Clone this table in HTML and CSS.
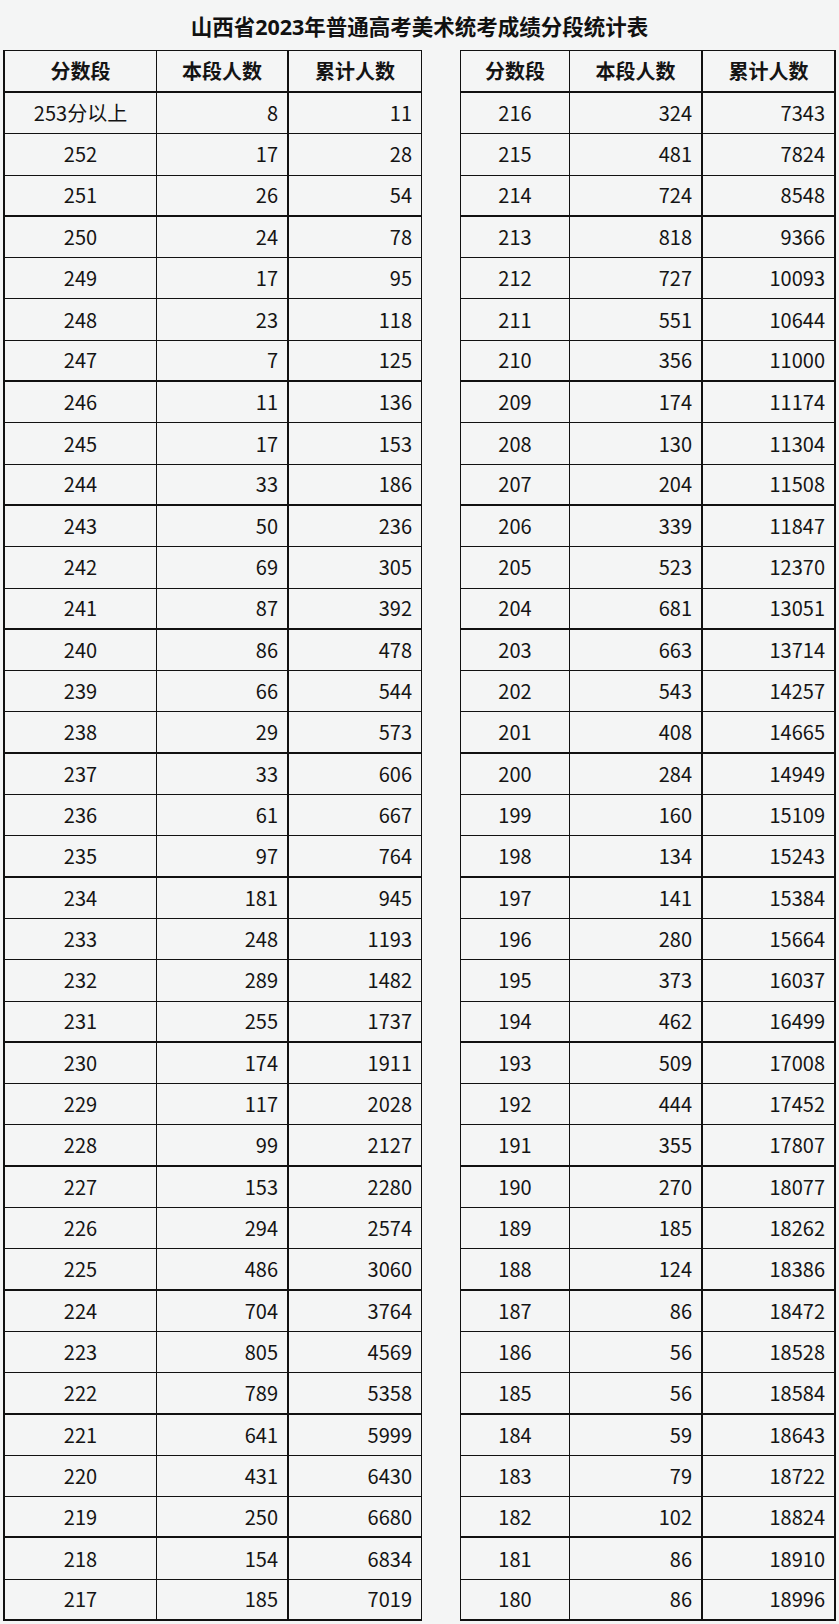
FILE: index.html
```html
<!DOCTYPE html>
<html lang="zh-CN">
<head>
<meta charset="utf-8">
<title>山西省2023年普通高考美术统考成绩分段统计表</title>
<link rel="stylesheet" href="styles.css">
</head>
<body>
<h1 class="title">山西省2023年普通高考美术统考成绩分段统计表</h1>
<div class="sheet">
  <div class="tbl tbl-left">
    <div class="row head"><div class="c c1">分数段</div><div class="c c2">本段人数</div><div class="c c3">累计人数</div></div>
    <div class="row"><div class="c c1">253分以上</div><div class="c c2">8</div><div class="c c3">11</div></div>
    <div class="row"><div class="c c1">252</div><div class="c c2">17</div><div class="c c3">28</div></div>
    <div class="row thick"><div class="c c1">251</div><div class="c c2">26</div><div class="c c3">54</div></div>
    <div class="row"><div class="c c1">250</div><div class="c c2">24</div><div class="c c3">78</div></div>
    <div class="row"><div class="c c1">249</div><div class="c c2">17</div><div class="c c3">95</div></div>
    <div class="row"><div class="c c1">248</div><div class="c c2">23</div><div class="c c3">118</div></div>
    <div class="row thick"><div class="c c1">247</div><div class="c c2">7</div><div class="c c3">125</div></div>
    <div class="row"><div class="c c1">246</div><div class="c c2">11</div><div class="c c3">136</div></div>
    <div class="row"><div class="c c1">245</div><div class="c c2">17</div><div class="c c3">153</div></div>
    <div class="row thick"><div class="c c1">244</div><div class="c c2">33</div><div class="c c3">186</div></div>
    <div class="row"><div class="c c1">243</div><div class="c c2">50</div><div class="c c3">236</div></div>
    <div class="row"><div class="c c1">242</div><div class="c c2">69</div><div class="c c3">305</div></div>
    <div class="row thick"><div class="c c1">241</div><div class="c c2">87</div><div class="c c3">392</div></div>
    <div class="row"><div class="c c1">240</div><div class="c c2">86</div><div class="c c3">478</div></div>
    <div class="row"><div class="c c1">239</div><div class="c c2">66</div><div class="c c3">544</div></div>
    <div class="row thick"><div class="c c1">238</div><div class="c c2">29</div><div class="c c3">573</div></div>
    <div class="row"><div class="c c1">237</div><div class="c c2">33</div><div class="c c3">606</div></div>
    <div class="row"><div class="c c1">236</div><div class="c c2">61</div><div class="c c3">667</div></div>
    <div class="row thick"><div class="c c1">235</div><div class="c c2">97</div><div class="c c3">764</div></div>
    <div class="row"><div class="c c1">234</div><div class="c c2">181</div><div class="c c3">945</div></div>
    <div class="row"><div class="c c1">233</div><div class="c c2">248</div><div class="c c3">1193</div></div>
    <div class="row"><div class="c c1">232</div><div class="c c2">289</div><div class="c c3">1482</div></div>
    <div class="row thick"><div class="c c1">231</div><div class="c c2">255</div><div class="c c3">1737</div></div>
    <div class="row"><div class="c c1">230</div><div class="c c2">174</div><div class="c c3">1911</div></div>
    <div class="row"><div class="c c1">229</div><div class="c c2">117</div><div class="c c3">2028</div></div>
    <div class="row thick"><div class="c c1">228</div><div class="c c2">99</div><div class="c c3">2127</div></div>
    <div class="row"><div class="c c1">227</div><div class="c c2">153</div><div class="c c3">2280</div></div>
    <div class="row"><div class="c c1">226</div><div class="c c2">294</div><div class="c c3">2574</div></div>
    <div class="row thick"><div class="c c1">225</div><div class="c c2">486</div><div class="c c3">3060</div></div>
    <div class="row"><div class="c c1">224</div><div class="c c2">704</div><div class="c c3">3764</div></div>
    <div class="row"><div class="c c1">223</div><div class="c c2">805</div><div class="c c3">4569</div></div>
    <div class="row thick"><div class="c c1">222</div><div class="c c2">789</div><div class="c c3">5358</div></div>
    <div class="row"><div class="c c1">221</div><div class="c c2">641</div><div class="c c3">5999</div></div>
    <div class="row"><div class="c c1">220</div><div class="c c2">431</div><div class="c c3">6430</div></div>
    <div class="row thick"><div class="c c1">219</div><div class="c c2">250</div><div class="c c3">6680</div></div>
    <div class="row"><div class="c c1">218</div><div class="c c2">154</div><div class="c c3">6834</div></div>
    <div class="row thick"><div class="c c1">217</div><div class="c c2">185</div><div class="c c3">7019</div></div>
  </div>
  <div class="tbl tbl-right">
    <div class="row head"><div class="c c1">分数段</div><div class="c c2">本段人数</div><div class="c c3">累计人数</div></div>
    <div class="row"><div class="c c1">216</div><div class="c c2">324</div><div class="c c3">7343</div></div>
    <div class="row"><div class="c c1">215</div><div class="c c2">481</div><div class="c c3">7824</div></div>
    <div class="row thick"><div class="c c1">214</div><div class="c c2">724</div><div class="c c3">8548</div></div>
    <div class="row"><div class="c c1">213</div><div class="c c2">818</div><div class="c c3">9366</div></div>
    <div class="row"><div class="c c1">212</div><div class="c c2">727</div><div class="c c3">10093</div></div>
    <div class="row"><div class="c c1">211</div><div class="c c2">551</div><div class="c c3">10644</div></div>
    <div class="row thick"><div class="c c1">210</div><div class="c c2">356</div><div class="c c3">11000</div></div>
    <div class="row"><div class="c c1">209</div><div class="c c2">174</div><div class="c c3">11174</div></div>
    <div class="row"><div class="c c1">208</div><div class="c c2">130</div><div class="c c3">11304</div></div>
    <div class="row thick"><div class="c c1">207</div><div class="c c2">204</div><div class="c c3">11508</div></div>
    <div class="row"><div class="c c1">206</div><div class="c c2">339</div><div class="c c3">11847</div></div>
    <div class="row"><div class="c c1">205</div><div class="c c2">523</div><div class="c c3">12370</div></div>
    <div class="row thick"><div class="c c1">204</div><div class="c c2">681</div><div class="c c3">13051</div></div>
    <div class="row"><div class="c c1">203</div><div class="c c2">663</div><div class="c c3">13714</div></div>
    <div class="row"><div class="c c1">202</div><div class="c c2">543</div><div class="c c3">14257</div></div>
    <div class="row thick"><div class="c c1">201</div><div class="c c2">408</div><div class="c c3">14665</div></div>
    <div class="row"><div class="c c1">200</div><div class="c c2">284</div><div class="c c3">14949</div></div>
    <div class="row"><div class="c c1">199</div><div class="c c2">160</div><div class="c c3">15109</div></div>
    <div class="row thick"><div class="c c1">198</div><div class="c c2">134</div><div class="c c3">15243</div></div>
    <div class="row"><div class="c c1">197</div><div class="c c2">141</div><div class="c c3">15384</div></div>
    <div class="row"><div class="c c1">196</div><div class="c c2">280</div><div class="c c3">15664</div></div>
    <div class="row"><div class="c c1">195</div><div class="c c2">373</div><div class="c c3">16037</div></div>
    <div class="row thick"><div class="c c1">194</div><div class="c c2">462</div><div class="c c3">16499</div></div>
    <div class="row"><div class="c c1">193</div><div class="c c2">509</div><div class="c c3">17008</div></div>
    <div class="row"><div class="c c1">192</div><div class="c c2">444</div><div class="c c3">17452</div></div>
    <div class="row thick"><div class="c c1">191</div><div class="c c2">355</div><div class="c c3">17807</div></div>
    <div class="row"><div class="c c1">190</div><div class="c c2">270</div><div class="c c3">18077</div></div>
    <div class="row"><div class="c c1">189</div><div class="c c2">185</div><div class="c c3">18262</div></div>
    <div class="row thick"><div class="c c1">188</div><div class="c c2">124</div><div class="c c3">18386</div></div>
    <div class="row"><div class="c c1">187</div><div class="c c2">86</div><div class="c c3">18472</div></div>
    <div class="row"><div class="c c1">186</div><div class="c c2">56</div><div class="c c3">18528</div></div>
    <div class="row thick"><div class="c c1">185</div><div class="c c2">56</div><div class="c c3">18584</div></div>
    <div class="row"><div class="c c1">184</div><div class="c c2">59</div><div class="c c3">18643</div></div>
    <div class="row"><div class="c c1">183</div><div class="c c2">79</div><div class="c c3">18722</div></div>
    <div class="row thick"><div class="c c1">182</div><div class="c c2">102</div><div class="c c3">18824</div></div>
    <div class="row"><div class="c c1">181</div><div class="c c2">86</div><div class="c c3">18910</div></div>
    <div class="row thick"><div class="c c1">180</div><div class="c c2">86</div><div class="c c3">18996</div></div>
  </div>
</div>
</body>
</html>
```

FILE: styles.css
```css
html, body {
  margin: 0;
  padding: 0;
  background: #f4f5f5;
}

body {
  width: 839px;
  color: #141414;
  font-family: "Noto Sans CJK SC", "Noto Sans", sans-serif;
}

.title {
  margin: 0;
  height: 46px;
  padding-top: 4px;
  line-height: 46px;
  text-align: center;
  font-family: "Noto Sans", "Noto Sans CJK SC", sans-serif;
  font-size: 21.5px;
  font-weight: 700;
  color: #111;
}

.sheet {
  display: flex;
  align-items: flex-start;
  gap: 38px;
  padding-left: 3px;
}

.tbl {
  display: grid;
  grid-template-rows: 42px;
  grid-auto-rows: 41.3px;
  border-top: 1px solid #111;
  border-left: 1px solid #111;
}

.tbl-left {
  grid-template-columns: 152px 132px 133px;
  border-left-width: 2px;
}

.tbl-right {
  grid-template-columns: 109px 133px 133px;
}

.row {
  display: contents;
}

.c {
  box-sizing: border-box;
  display: flex;
  align-items: center;
  justify-content: flex-end;
  padding-right: 9px;
  border-right: 1px solid #111;
  border-bottom: 1px solid #111;
  font-size: 20px;
  line-height: 1;
  white-space: nowrap;
}

.c1 {
  justify-content: center;
  padding-right: 0;
}

.tbl-left .c2 {
  border-right-width: 2px;
}

.tbl-right .c2 {
  border-right-width: 2px;
}

.tbl-right .c3 {
  border-right-width: 2px;
}

.head .c {
  justify-content: center;
  padding-right: 0;
  font-weight: 700;
  border-bottom-width: 2px;
}

.thick .c {
  border-bottom-width: 2px;
}
```
